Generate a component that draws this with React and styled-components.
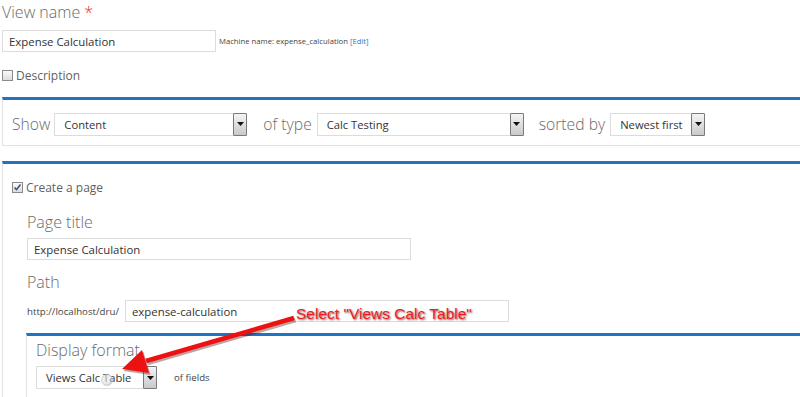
import React from 'react';
import styled, { createGlobalStyle } from 'styled-components';

const GlobalStyle = createGlobalStyle`
  body {
    margin: 0;
    background: #fff;
    font-family: "Open Sans", sans-serif;
    color: #666;
    overflow: hidden;
  }
`;

const Page = styled.div`
  position: relative;
  width: 798px;
  height: 397px;
  overflow: hidden;
  padding-left: 2px;
`;

const Heading = styled.div`
  font-weight: 300;
  font-size: ${({ size }) => size || 16}px;
  line-height: 24px;
  color: #6a6a6a;
  margin-top: ${({ top }) => top || 0}px;
`;

const Required = styled.span`
  color: #e8321e;
`;

const Row = styled.div`
  display: flex;
  align-items: center;
  gap: ${({ gap }) => gap || 0}px;
  margin-top: ${({ top }) => top || 0}px;
`;

const TextInput = styled.div`
  box-sizing: border-box;
  width: ${({ w }) => w}px;
  height: 22px;
  margin-top: ${({ top }) => top || 0}px;
  border: 1px solid #dcdcdc;
  padding-left: 6px;
  display: flex;
  align-items: center;
  font-size: 11.4px;
  color: #333;
`;

const Small = styled.span`
  font-size: ${({ size }) => size || 9.7}px;
  color: #444;
`;

const EditLink = styled.a`
  color: #2a7bc5;
  text-decoration: none;
`;

const Box = styled.span`
  box-sizing: border-box;
  width: 11px;
  height: 11px;
  border: 1px solid #8a8a8a;
  background: linear-gradient(#fafafa, #dcdcdc);
  display: inline-flex;
  align-items: center;
  justify-content: center;
  margin-right: 3px;
`;

const CheckLabel = styled.span`
  font-size: 12px;
  color: #5f5f5f;
`;

const Fieldset = styled.div`
  border-top: 3px solid #1e74c0;
  border-left: 1px solid #e2e2e2;
  border-bottom: ${({ open }) => (open ? 'none' : '1px solid #e2e2e2')};
  margin-top: ${({ top }) => top || 0}px;
  margin-left: ${({ indent }) => indent || 0}px;
  padding: ${({ pad }) => pad};
  min-height: ${({ minH }) => minH || 0}px;
`;

const InlineLabel = styled.span`
  font-weight: 300;
  font-size: 15.7px;
  color: #6a6a6a;
  margin: 0 ${({ right }) => right || 4}px 0 ${({ left }) => left || 0}px;
  line-height: 24px;
`;

const SelectBox = styled.div`
  box-sizing: border-box;
  width: ${({ w }) => w}px;
  height: 23px;
  border: 1px solid #dcdcdc;
  display: flex;
  align-items: center;
  justify-content: space-between;
  padding-left: 9px;
  font-size: 11.2px;
  color: #333;
`;

const DropButton = styled.span`
  box-sizing: border-box;
  width: 14px;
  height: 23px;
  margin-right: -1px;
  border: 1px solid #7a7a7a;
  border-radius: 1px;
  background: linear-gradient(#f4f4f4, #c9c9c9);
  display: flex;
  align-items: center;
  justify-content: center;
`;

const Indent = styled.div`
  padding-left: 15px;
`;

const Callout = styled.div`
  position: absolute;
  left: 296px;
  top: 305px;
  font-family: "Liberation Sans", Arial, sans-serif;
  font-size: 15.5px;
  color: #f21c1c;
  text-shadow: 1px 1px 2px rgba(60, 0, 0, 0.7);
  white-space: nowrap;
`;

const Overlay = styled.svg`
  position: absolute;
  left: 0;
  top: 0;
  pointer-events: none;
`;

const Select = ({ w, children }) => (
  <SelectBox w={w}>
    {children}
    <DropButton>
      <svg width="7" height="4" viewBox="0 0 7 4">
        <path d="M0 0h7L3.5 4z" fill="#111" />
      </svg>
    </DropButton>
  </SelectBox>
);

const Checkbox = ({ checked, label }) => (
  <Row>
    <Box>
      {checked && (
        <svg width="9" height="9" viewBox="0 0 9 9">
          <path d="M1.5 4.5l2 2.2L7.5 1.5" fill="none" stroke="#3a4a7a" strokeWidth="1.5" />
        </svg>
      )}
    </Box>
    <CheckLabel>{label}</CheckLabel>
  </Row>
);

export default function App() {
  return (
    <>
      <GlobalStyle />
      <Page>
        <Heading size={16}>
          View name <Required>*</Required>
        </Heading>
        <Row top={6} gap={3}>
          <TextInput w={214}>Expense Calculation</TextInput>
          <Small size={7.7}>
            Machine name: expense_calculation <EditLink href="#">[Edit]</EditLink>
          </Small>
        </Row>
        <Row top={15}>
          <Checkbox label="Description" />
        </Row>

        <Fieldset top={13} pad="12px 0 9px 9px">
          <Row>
            <InlineLabel>Show</InlineLabel>
            <Select w={193}>Content</Select>
            <InlineLabel left={16} right={5}>of type</InlineLabel>
            <Select w={207}>Calc Testing</Select>
            <InlineLabel left={15} right={5}>sorted by</InlineLabel>
            <Select w={95}>Newest first</Select>
          </Row>
        </Fieldset>

        <Fieldset top={15} pad="15px 0 0 9px" open minH={240}>
          <Checkbox checked label="Create a page" />
          <Indent>
            <Heading top={14}>Page title</Heading>
            <TextInput w={384} top={4}>Expense Calculation</TextInput>
            <Heading top={10}>Path</Heading>
            <Row top={6} gap={6}>
              <Small>http://localhost/dru/</Small>
              <TextInput w={384}>expense-calculation</TextInput>
            </Row>
            <Fieldset top={11} indent={-1} pad="2px 0 0 9px" open minH={60}>
              <Heading>Display format</Heading>
              <Row top={4} gap={17}>
                <Select w={121}>Views Calc Table</Select>
                <Small>of fields</Small>
              </Row>
            </Fieldset>
          </Indent>
        </Fieldset>

        <Callout>Select "Views Calc Table"</Callout>
        <Overlay width="800" height="397" viewBox="0 0 800 397">
          <defs>
            <radialGradient id="spin" cx="0.4" cy="0.4" r="0.6">
              <stop offset="0" stopColor="#f6d9a8" stopOpacity="0.7" />
              <stop offset="0.6" stopColor="#dfe6ee" stopOpacity="0.55" />
              <stop offset="1" stopColor="#9fb2c6" stopOpacity="0.5" />
            </radialGradient>
          </defs>
          <g opacity="0.35" transform="translate(1.5 2)">
            <path d="M294 318 L146 361" stroke="#400" strokeWidth="4.5" />
            <path d="M122 369 L142 350 L149 373 Z" fill="#400" />
          </g>
          <path d="M294 318 L146 361" stroke="#ee1111" strokeWidth="4.5" />
          <path d="M122 369 L142 350 L149 373 Z" fill="#ee1111" />
          <circle cx="107" cy="380" r="5.5" fill="url(#spin)" stroke="#b8c4d0" strokeOpacity="0.7" strokeWidth="1" />
        </Overlay>
      </Page>
    </>
  );
}
